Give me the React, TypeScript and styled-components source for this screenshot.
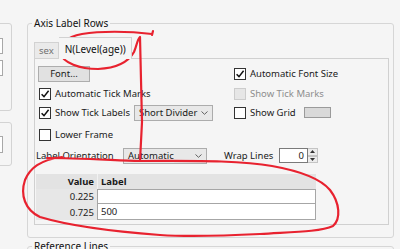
import * as React from 'react'
import styled, { createGlobalStyle } from 'styled-components'

const GlobalStyle = createGlobalStyle`
    html, body {
        margin: 0;
        padding: 0;
        background: #f5f5f5;
    }
    body {
        font-family: "Noto Sans", "Open Sans", sans-serif;
        font-size: 9.5px;
        color: #1a1a1a;
    }
`

const Check: React.FunctionComponent<{ checked?: boolean, disabled?: boolean }> = ({ checked, disabled }) => (
    <Box $disabled={disabled}>
        {checked && (
            <svg width="10" height="10" viewBox="0 0 10 10">
                <path d="M1.6 5.2 L4 7.6 L8.6 1.8" fill="none" stroke="#111" strokeWidth="1.5" />
            </svg>
        )}
    </Box>
)

const CheckOption: React.FunctionComponent<{ label: string, checked?: boolean, disabled?: boolean }> = ({ label, checked, disabled }) => (
    <Option $disabled={disabled}>
        <Check checked={checked} disabled={disabled} />
        <span>{label}</span>
    </Option>
)

const Chevron = () => (
    <svg width="7" height="4" viewBox="0 0 7 4">
        <path d="M0.5 0.5 L3.5 3.3 L6.5 0.5" fill="none" stroke="#606060" strokeWidth="1" />
    </svg>
)

const Select: React.FunctionComponent<{ value: string, width: number }> = ({ value, width }) => (
    <Dropdown $width={width}>
        <span>{value}</span>
        <Chevron />
    </Dropdown>
)

const rows = [
    { value: '0.225', label: '' },
    { value: '0.725', label: '500' },
]

export default function App()
{
    return (
        <Page>
            <GlobalStyle />
            <Layout>
                <SideColumn>
                    <SidePanel $height={88} $pad={14}>
                        <Stub $height={16} />
                        <Stub $height={16} />
                    </SidePanel>
                    <SidePanel $height={44} $pad={13}>
                        <Stub $height={17} />
                    </SidePanel>
                </SideColumn>

                <Main>
                    <Group>
                        <Legend>Axis Label Rows</Legend>
                        <TabStrip>
                            <Tab>sex</Tab>
                            <Tab $active>N(Level(age))</Tab>
                        </TabStrip>
                        <TabPanel>
                            <Line>
                                <LeftCell><FontButton>Font...</FontButton></LeftCell>
                                <RightCell><CheckOption checked label="Automatic Font Size" /></RightCell>
                            </Line>
                            <Line $gap={3}>
                                <LeftCell><CheckOption checked label="Automatic Tick Marks" /></LeftCell>
                                <RightCell><CheckOption disabled label="Show Tick Marks" /></RightCell>
                            </Line>
                            <Line $gap={2}>
                                <LeftCell>
                                    <CheckOption checked label="Show Tick Labels" />
                                    <Select value="Short Divider" width={79} />
                                </LeftCell>
                                <RightCell>
                                    <CheckOption label="Show Grid" />
                                    <Swatch />
                                </RightCell>
                            </Line>
                            <Line $gap={5}>
                                <LeftCell><CheckOption label="Lower Frame" /></LeftCell>
                            </Line>
                            <Line $gap={4}>
                                <FieldLabel $width={83}>Label Orientation</FieldLabel>
                                <Select value="Automatic" width={84} />
                                <FieldLabel $width={55} style={{ marginLeft: 17 }}>Wrap Lines</FieldLabel>
                                <Spinner>
                                    <SpinInput>0</SpinInput>
                                    <SpinButtons>
                                        <SpinButton>
                                            <svg width="5" height="3" viewBox="0 0 5 3"><path d="M0 3 L2.5 0 L5 3 Z" fill="#333" /></svg>
                                        </SpinButton>
                                        <SpinButton>
                                            <svg width="5" height="3" viewBox="0 0 5 3"><path d="M0 0 L2.5 3 L5 0 Z" fill="#333" /></svg>
                                        </SpinButton>
                                    </SpinButtons>
                                </Spinner>
                            </Line>

                            <Table>
                                <HeadCell $value>Value</HeadCell>
                                <HeadCell>Label</HeadCell>
                                {rows.map((row, i) => (
                                    <React.Fragment key={i}>
                                        <ValueCell>{row.value}</ValueCell>
                                        <LabelCell $first={i == 0}>{row.label}</LabelCell>
                                    </React.Fragment>
                                ))}
                            </Table>
                        </TabPanel>
                    </Group>

                    <Group $next>
                        <Legend>Reference Lines</Legend>
                    </Group>
                </Main>
            </Layout>

            <Marker viewBox="0 0 400 249" width="400" height="249">
                <path
                    d="M153 31 L152 35 M152 34 C128 31 100 31 82 34 C66 37 58 45 60 53 C63 63 80 69 98 69 C117 68 129 61 134 52 C137 45 137 40 140 37 L141 80 L142 122 L140 161"
                />
                <path
                    d="M47 158 C75 158 110 160 140 161 C190 161 240 160 272 166 C300 171 320 178 330 190 C340 203 341 219 333 226 C320 232 290 232 260 234 C220 236 190 237 160 235 C120 232 70 226 40 217 C25 210 20 195 25 180 C30 168 40 160 62 157"
                />
            </Marker>
        </Page>
    )
}

const Page = styled.div`
    position: relative;
    width: 400px;
    height: 249px;
    overflow: hidden;
    padding-top: 16px;
    box-sizing: border-box;
`

const Layout = styled.div`
    display: flex;
    align-items: flex-start;
`

const SideColumn = styled.div`
    width: 12px;
    margin-top: 7px;
    margin-right: 15px;
    display: flex;
    flex-direction: column;
    gap: 11px;
`

const SidePanel = styled.div<{ $height: number, $pad: number }>`
    width: 32px;
    height: ${props => props.$height}px;
    margin-left: -20px;
    box-sizing: border-box;
    border: 1px solid #d3d3d3;
    border-radius: 3px;
    padding: ${props => props.$pad}px 0 0 12px;
    display: flex;
    flex-direction: column;
    gap: 6px;
`

const Stub = styled.div<{ $height: number }>`
    width: 10px;
    height: ${props => props.$height}px;
    box-sizing: border-box;
    border: 1px solid #a8a8a8;
    background: #fff;
`

const Main = styled.div`
    width: 367px;
    display: flex;
    flex-direction: column;
`

const Group = styled.fieldset<{ $next?: boolean }>`
    margin: ${props => props.$next ? '1px 0 0' : '0'};
    padding: 7px 4px 12px 6px;
    min-width: 0;
    border: 1px solid #d6d6d6;
    border-radius: 3px;
    height: ${props => props.$next ? '40px' : 'auto'};
`

const Legend = styled.legend`
    margin-left: -2px;
    padding: 0 2px;
    line-height: 14px;
    font-size: 10px;
    color: #111;
`

const TabStrip = styled.div`
    position: relative;
    z-index: 1;
    display: flex;
    align-items: flex-end;
    height: 22px;
    margin-bottom: -1px;
`

const Tab = styled.div<{ $active?: boolean }>`
    box-sizing: border-box;
    height: ${props => props.$active ? 22 : 17}px;
    padding: ${props => props.$active ? '0 5px 0 6px' : '0 4px 0 4px'};
    display: flex;
    align-items: center;
    border: 1px solid #d2d2d2;
    border-bottom: ${props => props.$active ? 'none' : '1px solid #d2d2d2'};
    border-left: ${props => props.$active ? 'none' : '1px solid #d2d2d2'};
    background: ${props => props.$active ? '#f5f5f5' : '#eaeaea'};
    color: ${props => props.$active ? '#111' : '#707070'};
    font-size: ${props => props.$active ? '10px' : '9.5px'};
    padding-top: ${props => props.$active ? '1px' : '0'};
`

const TabPanel = styled.div`
    width: 355px;
    height: 167px;
    box-sizing: border-box;
    border: 1px solid #d0d0d0;
    padding: 6px 0 0 1px;
    display: flex;
    flex-direction: column;
`

const Line = styled.div<{ $gap?: number }>`
    display: flex;
    align-items: center;
    height: 17px;
    margin-top: ${props => props.$gap || 0}px;
`

const LeftCell = styled.div`
    width: 195px;
    display: flex;
    align-items: center;
`

const RightCell = styled.div`
    display: flex;
    align-items: center;
`

const FontButton = styled.div`
    margin-left: 2px;
    width: 52px;
    height: 16px;
    box-sizing: border-box;
    border: 1px solid #adadad;
    background: #e1e1e1;
    display: flex;
    align-items: center;
    justify-content: center;
`

const Option = styled.div<{ $disabled?: boolean }>`
    display: flex;
    align-items: center;
    gap: 4px;
    margin-left: 3px;
    color: ${props => props.$disabled ? '#8d8d8d' : '#1a1a1a'};
    white-space: nowrap;
`

const Box = styled.div<{ $disabled?: boolean }>`
    width: 12px;
    height: 12px;
    box-sizing: border-box;
    border: 1px solid ${props => props.$disabled ? '#cccccc' : '#333333'};
    background: ${props => props.$disabled ? '#e6e6e6' : '#ffffff'};
    display: flex;
    align-items: center;
    justify-content: center;
`

const Dropdown = styled.div<{ $width: number }>`
    width: ${props => props.$width}px;
    height: 16px;
    margin-left: 4px;
    box-sizing: border-box;
    border: 1px solid #acacac;
    background: #e8e8e8;
    display: flex;
    align-items: center;
    justify-content: space-between;
    padding: 0 4px 0 4px;
    white-space: nowrap;
    overflow: hidden;
`

const Swatch = styled.div`
    width: 27px;
    height: 11px;
    margin-left: 8px;
    box-sizing: border-box;
    border: 1px solid #9a9a9a;
    background: #d9d9d9;
`

const FieldLabel = styled.div<{ $width: number }>`
    width: ${props => props.$width}px;
    white-space: nowrap;
    flex: none;
`

const Spinner = styled.div`
    display: flex;
    height: 15px;
`

const SpinInput = styled.div`
    width: 29px;
    box-sizing: border-box;
    border: 1px solid #7a7a7a;
    background: #fff;
    text-align: right;
    padding-right: 3px;
    line-height: 13px;
`

const SpinButtons = styled.div`
    width: 10px;
    display: flex;
    flex-direction: column;
`

const SpinButton = styled.div`
    flex: 1;
    box-sizing: border-box;
    border: 1px solid #c4c4c4;
    border-left: none;
    background: #ececec;
    display: flex;
    align-items: center;
    justify-content: center;
`

const Table = styled.div`
    margin-top: 10px;
    width: 280px;
    display: grid;
    grid-template-columns: 61px 219px;
    grid-template-rows: 15px 15px 16px;
    background: #e7e7e7;
`

const HeadCell = styled.div<{ $value?: boolean }>`
    font-weight: bold;
    background: #e3e3e3;
    display: flex;
    align-items: center;
    justify-content: ${props => props.$value ? 'flex-end' : 'flex-start'};
    padding: ${props => props.$value ? '0 3px 0 0' : '0 0 0 3px'};
    border-left: ${props => props.$value ? 'none' : '1px solid #f2f2f2'};
`

const ValueCell = styled.div`
    display: flex;
    align-items: center;
    justify-content: flex-end;
    padding-right: 3px;
    color: #222;
`

const LabelCell = styled.div<{ $first?: boolean }>`
    box-sizing: border-box;
    border: 1px solid #a6a6a6;
    border-top: ${props => props.$first ? '1px solid #a6a6a6' : 'none'};
    background: #fff;
    display: flex;
    align-items: center;
    padding-left: 3px;
`

const Marker = styled.svg`
    position: absolute;
    left: 0;
    top: 0;
    pointer-events: none;

    path {
        fill: none;
        stroke: #e8222f;
        stroke-width: 2.2;
        stroke-linecap: round;
        stroke-linejoin: round;
    }
`
